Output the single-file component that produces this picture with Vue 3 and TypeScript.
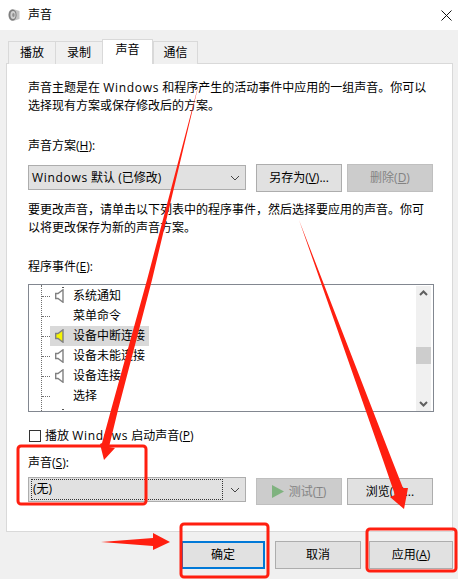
<script setup lang="ts">
interface SoundEvent {
  name: string
  hasSound: boolean
  selected?: boolean
}

const tabs = ['播放', '录制', '声音', '通信']
const activeTab = '声音'

const events: SoundEvent[] = [
  { name: '系统通知', hasSound: true },
  { name: '菜单命令', hasSound: false },
  { name: '设备中断连接', hasSound: true, selected: true },
  { name: '设备未能连接', hasSound: true },
  { name: '设备连接', hasSound: true },
  { name: '选择', hasSound: false }
]
</script>

<template>
  <div class="dialog">
    <header class="titlebar">
      <svg class="app-icon" width="12" height="14" viewBox="0 0 12 14">
        <path d="M5 1 L11.5 3 L11.5 11 L5 13 C2 13 0.5 10.5 0.5 7 C0.5 3.5 2 1 5 1 Z" fill="#c4c4c4" />
        <ellipse cx="4.6" cy="7" rx="4" ry="5.6" fill="#7d7d7d" />
        <ellipse cx="5" cy="7" rx="2.6" ry="4" fill="#cfcfcf" />
        <ellipse cx="5.4" cy="7" rx="1.2" ry="2" fill="#8f8f8f" />
      </svg>
      <span class="title">声音</span>
      <svg class="close" width="11" height="11" viewBox="0 0 11 11">
        <path d="M0.5 0.5 L10.5 10.5 M10.5 0.5 L0.5 10.5" stroke="#111" stroke-width="1" fill="none" />
      </svg>
    </header>

    <div class="body">
      <nav class="tabs">
        <div v-for="tab in tabs" :key="tab" class="tab" :class="{ active: tab === activeTab }">{{ tab }}</div>
      </nav>

      <section class="panel">
        <p class="intro">声音主题是在 <span class="latin">Windows</span> 和程序产生的活动事件中应用的一组声音。你可以<br />选择现有方案或保存修改后的方案。</p>

        <div class="label scheme-label">声音方案(<u>H</u>):</div>
        <div class="control-row">
          <div class="combo">
            <span class="combo-text"><span class="latin">Windows</span> 默认 (已修改)</span>
            <svg class="chevron" width="10" height="6" viewBox="0 0 10 6">
              <path d="M1 1 L5 5 L9 1" stroke="#444" stroke-width="1" fill="none" />
            </svg>
          </div>
          <button class="btn">另存为(<u>V</u>)...</button>
          <button class="btn disabled">删除(<u>D</u>)</button>
        </div>

        <p class="hint">要更改声音&#65292;请单击以下列表中的程序事件&#65292;然后选择要应用的声音。你可<br />以将更改保存为新的声音方案。</p>

        <div class="label events-label">程序事件(<u>E</u>):</div>
        <div class="list">
          <div class="tree">
            <div v-for="ev in events" :key="ev.name" class="row">
              <span class="branch"></span>
              <span class="item" :class="{ selected: ev.selected }">
                <svg v-if="ev.hasSound" class="speaker" width="9" height="14" viewBox="0 0 9 14">
                  <path
                    d="M0.7 4.5 H3 L8 0.8 V13.2 L3 9.5 H0.7 Z"
                    :fill="ev.selected ? '#f5f500' : '#fff'"
                    stroke="#808080"
                    stroke-width="1.4"
                  />
                </svg>
                <span class="item-text">{{ ev.name }}</span>
              </span>
            </div>
          </div>
          <span class="clip-dot top"></span>
          <span class="clip-dot bottom"></span>
          <div class="scrollbar">
            <svg width="15" height="15" viewBox="0 0 15 15">
              <path d="M4 9 L7.5 5.5 L11 9" stroke="#606060" stroke-width="2" fill="none" />
            </svg>
            <div class="thumb"></div>
            <svg width="15" height="15" viewBox="0 0 15 15">
              <path d="M4 6 L7.5 9.5 L11 6" stroke="#606060" stroke-width="2" fill="none" />
            </svg>
          </div>
        </div>

        <label class="check-row">
          <span class="checkbox"></span>
          <span>播放 <span class="latin">Windows</span> 启动声音(<u>P</u>)</span>
        </label>

        <div class="label sound-label">声音(<u>S</u>):</div>
        <div class="control-row sound-row">
          <div class="combo">
            <span class="combo-focus">(无)</span>
            <svg class="chevron" width="10" height="6" viewBox="0 0 10 6">
              <path d="M1 1 L5 5 L9 1" stroke="#444" stroke-width="1" fill="none" />
            </svg>
          </div>
          <button class="btn disabled">
            <svg class="play" width="12" height="13" viewBox="0 0 12 13">
              <path d="M0 0 L12 6.5 L0 13 Z" fill="#7fb27f" />
            </svg>
            测试(<u>T</u>)
          </button>
          <button class="btn">浏览(<u>B</u>)...</button>
        </div>
      </section>

      <footer class="actions">
        <button class="btn action primary">确定</button>
        <button class="btn action">取消</button>
        <button class="btn action last">应用(<u>A</u>)</button>
      </footer>
    </div>

    <svg class="annotations" width="458" height="579" viewBox="0 0 458 579">
      <g fill="#ff1f10">
        <polygon points="199,83 152,280 118,410 109,447 115,448 104,460 100,444 102,443 111,410 147,280" />
        <polygon points="299,220 392,460 403,488 408,488 404,509 390,497 395,495 383,460" />
        <polygon points="101,542 153,538 153,533 170,542 153,550 153,546" />
      </g>
      <g fill="none" stroke="#ff1f10" stroke-width="3">
        <rect x="18" y="446" width="128" height="58" rx="3" />
        <rect x="181" y="524" width="87" height="53" rx="3" />
        <rect x="367" y="529" width="89" height="42" rx="3" />
      </g>
    </svg>
  </div>
</template>

<style>
html,
body {
  margin: 0;
  background: #f0f0f0;
}
</style>

<style scoped>
.dialog {
  position: relative;
  width: 458px;
  height: 579px;
  overflow: hidden;
  background: #f0f0f0;
  color: #000;
  font-family: "Open Sans", "Noto Sans CJK SC", sans-serif;
  font-size: 12px;
  line-height: 18px;
}

.annotations {
  position: absolute;
  top: 0;
  left: 0;
  z-index: 2;
}

.latin {
  letter-spacing: 0.7px;
}

.titlebar {
  display: flex;
  align-items: center;
  height: 30px;
  padding: 0 6px 0 8px;
  background: #fff;
}

.app-icon {
  margin-right: 8px;
}

.close {
  margin-left: auto;
}

.body {
  padding: 0 5px 0 6px;
}

.tabs {
  display: flex;
  align-items: flex-end;
  height: 33px;
  padding-left: 2px;
  box-sizing: border-box;
}

.tab {
  box-sizing: border-box;
  width: 47px;
  height: 23px;
  margin-bottom: -1px;
  padding-top: 2px;
  border: 1px solid #d9d9d9;
  border-bottom: none;
  border-right: none;
  background: #f0f0f0;
  text-align: center;
}

.tab:last-child {
  width: 45px;
  border-right: 1px solid #d9d9d9;
}

.tab.active {
  position: relative;
  z-index: 1;
  width: 51px;
  height: 25px;
  padding-top: 1px;
  border-right: 1px solid #d9d9d9;
  background: #fff;
}

.panel {
  box-sizing: border-box;
  height: 469px;
  padding: 0 19px 0 21px;
  border: 1px solid #d9d9d9;
  background: #fff;
}

p {
  margin: 0;
}

.intro {
  margin-top: 15px;
}

.scheme-label {
  margin-top: 22px;
}

.control-row {
  display: flex;
  align-items: flex-start;
  margin-top: 9px;
}

.combo {
  box-sizing: border-box;
  display: flex;
  align-items: center;
  justify-content: space-between;
  width: 218px;
  height: 25px;
  margin-top: 1px;
  padding: 0 5px 0 3px;
  border: 1px solid #adadad;
  background: #e1e1e1;
}

.chevron {
  flex: none;
}

.btn {
  box-sizing: border-box;
  width: 86px;
  height: 28px;
  padding: 0;
  border: 1px solid #adadad;
  background: #e1e1e1;
  color: #000;
  font: inherit;
  margin-left: 5px;
}

.combo + .btn {
  margin-left: 10px;
}

.btn.disabled {
  border-color: #bfbfbf;
  background: #cccccc;
  color: #838383;
}

.hint {
  margin-top: 9px;
}

.events-label {
  margin-top: 21px;
}

.list {
  position: relative;
  box-sizing: border-box;
  height: 128px;
  width: 406px;
  margin-top: 8px;
  border: 1px solid #828790;
  background: #fff;
  overflow: hidden;
}

.tree {
  box-sizing: border-box;
  height: 100%;
  margin-left: 12px;
  padding-top: 1px;
  border-left: 1px dotted #707070;
}

.row {
  display: flex;
  align-items: center;
  height: 20px;
}

.branch {
  width: 8px;
  border-top: 1px dotted #707070;
}

.item {
  display: flex;
  align-items: center;
  height: 20px;
  width: 99px;
  padding-left: 5px;
  box-sizing: border-box;
}

.item.selected {
  background: #d9d9d9;
}

.speaker {
  flex: none;
}

.item-text {
  position: absolute;
  left: 44px;
}

.clip-dot {
  position: absolute;
  left: 33px;
  width: 2px;
  height: 1px;
  background: #555;
}

.clip-dot.top {
  top: 2px;
}

.clip-dot.bottom {
  bottom: 1px;
}

.scrollbar {
  position: absolute;
  top: 1px;
  right: 2px;
  bottom: 0;
  width: 15px;
  display: flex;
  flex-direction: column;
  justify-content: space-between;
  background: #f0f0f0;
}

.scrollbar svg {
  display: block;
}

.thumb {
  position: absolute;
  top: 61px;
  width: 15px;
  height: 17px;
  background: #cdcdcd;
}

.check-row {
  display: flex;
  align-items: center;
  gap: 4px;
  margin-top: 15px;
  padding-left: 1px;
}

.checkbox {
  box-sizing: border-box;
  width: 12px;
  height: 12px;
  border: 1px solid #333;
  background: #fff;
}

.sound-label {
  margin-top: 9px;
}

.sound-row {
  margin-top: 5px;
}

.sound-row .combo {
  margin-top: 0;
  padding-left: 3px;
}

.combo-focus {
  flex: 1;
  margin-right: 8px;
  padding: 0 0 0 1px;
  height: 19px;
  line-height: 18px;
  outline: 1px dotted #333;
}

.sound-row .btn {
  margin-top: 1px;
  height: 27px;
}

.play {
  vertical-align: -2px;
  margin-right: 2px;
}

.actions {
  display: flex;
  justify-content: flex-end;
  gap: 8px;
  margin-top: 9px;
}

.action {
  margin-left: 0;
  height: 28px;
}

.action.primary {
  width: 84px;
  margin-right: 2px;
  border: 2px solid #0078d7;
}

.action.last {
  width: 84px;
}
</style>
